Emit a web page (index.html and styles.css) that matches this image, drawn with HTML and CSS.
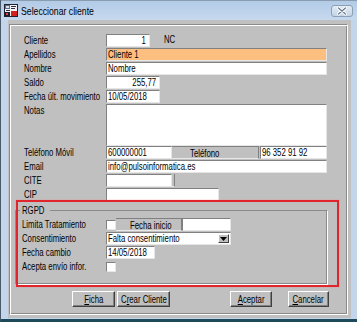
FILE: index.html
```html
<!DOCTYPE html>
<html>
<head>
<meta charset="utf-8">
<link rel="stylesheet" href="styles.css">
</head>
<body>
<div class="window">
  <div class="titlebar">
    <svg class="app-icon" width="14" height="14" viewBox="0 0 14 14">
      <rect x="0.5" y="0.5" width="13" height="12" fill="#f4f4f4" stroke="#202030"/>
      <rect x="1" y="1" width="5" height="4" fill="#5a6e8c"/>
      <rect x="2" y="2" width="3" height="2" fill="#d8e0ea"/>
      <rect x="7" y="2" width="5" height="1" fill="#303040"/>
      <rect x="7" y="4" width="4" height="1" fill="#303040"/>
      <rect x="2" y="6" width="4" height="1" fill="#303040"/>
      <rect x="7" y="7" width="6" height="5" fill="#d42020"/>
      <rect x="1" y="8" width="5" height="4" fill="#1c1c2a"/>
      <rect x="2" y="9" width="2" height="2" fill="#e04040"/>
    </svg>
    <span class="title"><span class="t tt">Seleccionar cliente</span></span>
    <div class="close">
      <svg width="22" height="12" viewBox="0 0 22 12">
        <path d="M7.5 3 L14.5 9 M14.5 3 L7.5 9" stroke="#ffffff" stroke-width="3" stroke-linecap="round"/>
        <path d="M7.5 3 L14.5 9 M14.5 3 L7.5 9" stroke="#6a7a90" stroke-width="1.3" stroke-linecap="round"/>
      </svg>
    </div>
  </div>
  <div class="client">
    <div class="panel">
      <div class="form">
        <div class="row"><span class="lbl"><span class="t">Cliente</span></span><div class="field num w44"><span class="t">1</span></div><span class="nc"><span class="t">NC</span></span></div>
        <div class="row"><span class="lbl"><span class="t">Apellidos</span></span><div class="field orange w221"><span class="t">Cliente 1</span></div></div>
        <div class="row"><span class="lbl"><span class="t">Nombre</span></span><div class="field w221"><span class="t">Nombre</span></div></div>
        <div class="row"><span class="lbl"><span class="t">Saldo</span></span><div class="field num w54"><span class="t">255,77</span></div></div>
        <div class="row"><span class="lbl"><span class="t">Fecha últ. movimiento</span></span><div class="field w54"><span class="t">10/05/2018</span></div></div>
        <div class="row notes-row"><span class="lbl"><span class="t">Notas</span></span><div class="field notes w221"></div></div>
        <div class="row"><span class="lbl"><span class="t">Teléfono Móvil</span></span><div class="field w66"><span class="t">600000001</span></div><div class="tag tel-tag"><span class="t">Teléfono</span></div><div class="field w67"><span class="t">96 352 91 92</span></div></div>
        <div class="row"><span class="lbl"><span class="t">Email</span></span><div class="field w221"><span class="t">info@pulsoinformatica.es</span></div></div>
        <div class="row"><span class="lbl"><span class="t">CITE</span></span><div class="field w66"></div><div class="tag sliver"></div></div>
        <div class="row"><span class="lbl"><span class="t">CIP</span></span><div class="field w113"></div></div>
      </div>
      <fieldset class="group">
        <legend><span class="t">RGPD</span></legend>
        <div class="row"><span class="glbl"><span class="t">Limita Tratamiento</span></span><div class="check"></div><div class="tag ini-tag"><span class="t">Fecha inicio</span></div><div class="field w49"></div></div>
        <div class="row"><span class="glbl"><span class="t">Consentimiento</span></span><div class="field select w125"><span class="t">Falta consentimiento</span><span class="arrow"><svg width="7" height="4" viewBox="0 0 7 4"><path d="M0 0 H7 L3.5 4 Z" fill="#000"/></svg></span></div></div>
        <div class="row"><span class="glbl"><span class="t">Fecha cambio</span></span><div class="field w49"><span class="t">14/05/2018</span></div></div>
        <div class="row"><span class="glbl"><span class="t">Acepta envío infor.</span></span><div class="check"></div></div>
      </fieldset>
      <div class="buttons">
        <div class="btn b-ficha"><span class="t"><u>F</u>icha</span></div>
        <div class="btn b-crear"><span class="t">C<u>r</u>ear Cliente</span></div>
        <div class="btn b-aceptar"><span class="t"><u>A</u>ceptar</span></div>
        <div class="btn b-cancelar"><span class="t"><u>C</u>ancelar</span></div>
      </div>
    </div>
  </div>
  <div class="annotation"></div>
</div>
</body>
</html>
```
FILE: styles.css
```css
* { box-sizing: border-box; }
html, body { margin: 0; padding: 0; background: #1c4a5a; }
body {
  font-family: "Liberation Sans", Arial, sans-serif;
  font-size: 10.5px;
  color: #000;
}
.t {
  display: inline-block;
  transform: scaleX(0.74);
  transform-origin: left center;
  white-space: nowrap;
}
.tt { transform: scaleX(0.79); }
.window {
  position: relative;
  width: 357px;
  height: 322px;
  background: #c2d5ea;
  border-left: 1px solid #4a5a6a;
  border-bottom: 3px solid #1c4a5a;
  display: flex;
  flex-direction: column;
}
.titlebar {
  height: 20px;
  display: flex;
  align-items: center;
  background: linear-gradient(#b3cbe7, #c6d9ee);
  border-top: 1px solid #8a9cb0;
}
.app-icon { margin-left: 3px; margin-right: 3px; flex: none; }
.title { font-size: 11px; color: #000; flex: 1; line-height: 14px; }
.close {
  margin-left: auto;
  margin-right: 4px;
  width: 22px;
  height: 12px;
  border: 1px solid #8aa0b8;
  border-radius: 3px;
  background: linear-gradient(#e2ebf5, #c4d4e6);
  display: flex;
  flex: none;
}
.close svg { margin: -1px; }
.client {
  margin: 0 6px 1px 7px;
  height: 298px;
  background: #c0c0c0;
  padding: 4px 0 0 1px;
}
.panel {
  width: 339px;
  height: 291px;
  border: 1px solid;
  border-color: #8a8a8a #ffffff #ffffff #8a8a8a;
  box-shadow: inset 1px 1px 0 #ffffff, inset -1px -1px 0 #8a8a8a;
  display: flex;
  flex-direction: column;
}
.form { padding: 9px 0 0 14px; }
.row {
  display: flex;
  align-items: flex-start;
  height: 14px;
}
.lbl, .glbl {
  line-height: 13px;
  white-space: nowrap;
  flex: none;
}
.lbl { width: 82px; }
.glbl { width: 84px; }
.notes-row { height: 42px; }
.field {
  height: 13px;
  line-height: 11px;
  background: #fff;
  border: 1px solid;
  border-color: #808080 #e6e6e6 #e6e6e6 #808080;
  padding: 0 1px;
  white-space: nowrap;
  overflow: hidden;
  flex: none;
}
.field.num { text-align: right; padding-right: 3px; }
.field.num .t { transform-origin: right center; }
.orange { background: #fdbf7f; }
.notes { height: 42px; }
.w44 { width: 44px; }
.w49 { width: 49px; }
.w54 { width: 54px; }
.w66 { width: 66px; }
.w67 { width: 67px; margin-left: 1px; }
.w113 { width: 113px; }
.w125 { width: 125px; }
.w221 { width: 221px; }
.nc { margin-left: 14px; line-height: 11px; }
.tag {
  height: 13px;
  line-height: 12px;
  background: #c0c0c0;
  border-top: 1px solid #808080;
  border-right: 1px solid #808080;
  border-bottom: 1px solid #e8e8e8;
  flex: none;
  white-space: nowrap;
}
.tel-tag { width: 87px; padding-left: 18px; }
.sliver { width: 3px; border-top: none; }
.ini-tag { width: 66px; padding-left: 14px; }
.group {
  margin: 3px 0 0 5px;
  width: 312px;
  padding: 3px 0 9px 6px;
  border: 1px solid #8a8a8a;
  box-shadow: 1px 1px 0 #ffffff;
  min-width: 0;
}
.group legend {
  padding: 0 3px 0 2px;
  margin-left: -2px;
  line-height: 10px;
  width: 30px;
}
.check {
  width: 10px;
  height: 10px;
  margin-top: 2px;
  background: #fff;
  border: 1px solid;
  border-color: #808080 #e6e6e6 #e6e6e6 #808080;
  flex: none;
}
.select {
  display: flex;
  align-items: center;
  justify-content: space-between;
  padding-right: 1px;
}
.arrow {
  width: 11px;
  height: 9px;
  background: #c0c0c0;
  border: 1px solid;
  border-color: #ffffff #404040 #404040 #ffffff;
  display: flex;
  align-items: center;
  justify-content: center;
  flex: none;
}
.buttons {
  display: flex;
  margin-top: 7px;
  padding-left: 62px;
}
.btn {
  height: 16px;
  line-height: 14px;
  display: flex;
  justify-content: center;
  border: 1px solid;
  border-color: #ffffff #404040 #404040 #ffffff;
  box-shadow: inset -1px -1px 0 #808080;
  white-space: nowrap;
  flex: none;
}
.btn .t { transform-origin: center center; flex: none; }
.b-ficha { width: 43px; }
.b-crear { width: 53px; margin-left: 2px; }
.b-aceptar { width: 42px; margin-left: 60px; }
.b-cancelar { width: 41px; margin-left: 16px; }
.annotation {
  position: absolute;
  left: 15px;
  top: 200px;
  width: 323px;
  height: 87px;
  border: 2px solid #e0262c;
  box-shadow: 0 0 1px #f08080;
}
```
